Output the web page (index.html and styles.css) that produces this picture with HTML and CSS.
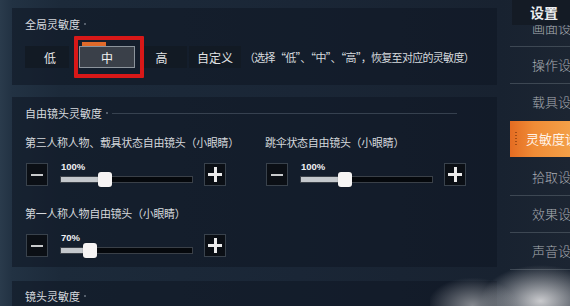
FILE: index.html
```html
<!DOCTYPE html>
<html lang="zh">
<head>
<meta charset="utf-8">
<link rel="stylesheet" href="styles.css">
</head>
<body>
<div class="screen">
  <main class="main">
    <section class="panel panel-global">
      <div class="title">全局灵敏度<span class="dot"></span></div>
      <div class="presets">
        <div class="preset p-low">低</div>
        <div class="preset p-mid selected">中<span class="tab"></span></div>
        <div class="preset p-high">高</div>
        <div class="preset p-custom">自定义</div>
        <div class="hint">（选择“低”、“中”、“高”，恢复至对应的灵敏度）</div>
        <div class="highlight"></div>
      </div>
    </section>

    <section class="panel panel-free">
      <div class="title with-line">自由镜头灵敏度<span class="dot"></span><span class="rule"></span></div>
      <div class="grid">
        <div class="cell">
          <div class="label">第三人称人物、载具状态自由镜头（小眼睛）</div>
          <div class="slider">
            <div class="step minus"><span class="bar-h"></span></div>
            <div class="track-wrap">
              <div class="value">100%</div>
              <div class="track"><div class="fill" style="width:33%"></div><div class="knob" style="left:28%"></div></div>
            </div>
            <div class="step plus"><span class="bar-h"></span><span class="bar-v"></span></div>
          </div>
        </div>
        <div class="cell">
          <div class="label">跳伞状态自由镜头（小眼睛）</div>
          <div class="slider">
            <div class="step minus"><span class="bar-h"></span></div>
            <div class="track-wrap">
              <div class="value">100%</div>
              <div class="track"><div class="fill" style="width:33%"></div><div class="knob" style="left:28%"></div></div>
            </div>
            <div class="step plus"><span class="bar-h"></span><span class="bar-v"></span></div>
          </div>
        </div>
        <div class="cell">
          <div class="label">第一人称人物自由镜头（小眼睛）</div>
          <div class="slider">
            <div class="step minus"><span class="bar-h"></span></div>
            <div class="track-wrap">
              <div class="value">70%</div>
              <div class="track"><div class="fill" style="width:22%"></div><div class="knob" style="left:17%"></div></div>
            </div>
            <div class="step plus"><span class="bar-h"></span><span class="bar-v"></span></div>
          </div>
        </div>
      </div>
    </section>

    <section class="panel panel-lens">
      <div class="title">镜头灵敏度<span class="dot"></span></div>
    </section>
  </main>

  <aside class="side">
    <div class="side-head">设置</div>
    <div class="side-item first">画面设</div>
    <div class="side-item">操作设</div>
    <div class="side-item">载具设</div>
    <div class="side-item active"><span class="grip"></span>灵敏度设</div>
    <div class="side-item">拾取设</div>
    <div class="side-item">效果设</div>
    <div class="side-item">声音设</div>
  </aside>
  <div class="smoke"></div>
</div>
</body>
</html>
```

FILE: styles.css
```css
* { box-sizing: border-box; margin: 0; padding: 0; }
html, body { width: 570px; height: 306px; overflow: hidden; background: #1b2735; }
body {
  font-family: "Noto Sans CJK SC", "Noto Sans", sans-serif;
  color: #d4d8dc;
}
.screen {
  position: relative;
  width: 570px;
  height: 306px;
  display: flex;
  background:
    linear-gradient(90deg, #2a3b4c 0px, #223243 12px, #1c2a3a 60px, #1a2636 300px, #182230 500px, #1c2532 570px);
  overflow: hidden;
}
.main {
  width: 507px;
  flex: none;
  padding: 8px 10px 0 12px;
  display: flex;
  flex-direction: column;
}
.panel {
  flex: none;
  background: rgba(14, 22, 34, 0.55);
  padding: 9px 0 0 13px;
}
.panel-global { height: 77px; }
.panel-free { height: 170px; margin-top: 12px; }
.panel-lens { margin-top: 14px; height: 40px; padding-top: 8px; }

.title {
  display: flex;
  align-items: center;
  font-size: 11px;
  line-height: 14px;
  height: 14px;
  color: #d6dade;
  white-space: nowrap;
}
.dot {
  width: 2px; height: 2px; border-radius: 50%;
  background: #6a7480; margin-left: 4px;
}
.rule {
  flex: none;
  width: 345px;
  height: 1px;
  background: rgba(120, 134, 150, 0.35);
  margin-left: 4px;
}

.presets {
  position: relative;
  display: flex;
  align-items: center;
  margin-top: 15px;
  height: 22px;
}
.preset {
  height: 22px;
  display: flex;
  align-items: center;
  justify-content: center;
  background: #121a24;
  font-size: 12px;
  color: #e2e4e6;
}
.p-low { width: 44px; margin-right: 10px; padding-left: 6px; }
.p-mid { width: 56px; margin-right: 9px; position: relative; }
.p-high { width: 43px; margin-right: 2px; padding-right: 8px; }
.p-custom { width: 52px; }
.selected {
  background: #3a4049;
  border: 1px solid #8c949c;
  color: #f2f2f2;
}
.tab {
  position: absolute;
  left: 2px; top: -5px;
  width: 24px; height: 4px;
  background: #e06a2a;
}
.hint {
  margin-left: 3px;
  font-size: 11px;
  color: #d6dade;
  white-space: nowrap;
  letter-spacing: -0.7px;
}
.highlight {
  position: absolute;
  left: 49px;
  top: -10px;
  width: 70px;
  height: 42px;
  border: 4px solid #d81818;
  border-radius: 1px;
}

.grid {
  display: grid;
  grid-template-columns: 240px 232px;
  margin-top: 15px;
  row-gap: 20px;
}
.label {
  font-size: 11px;
  line-height: 14px;
  color: #d4d8dc;
  white-space: nowrap;
  letter-spacing: -0.3px;
}
.slider {
  display: flex;
  align-items: flex-start;
  margin-top: 14px;
  margin-left: 1px;
}
.step {
  position: relative;
  width: 22px;
  height: 23px;
  background: #0b0f15;
  border: 1px solid #39424c;
  flex: none;
}
.bar-h {
  position: absolute;
  left: 4px; right: 4px; top: 10px;
  height: 2px;
  background: #c8cacc;
}
.plus .bar-h { left: 3px; right: 3px; height: 3px; top: 9px; background: #ececec; }
.bar-v {
  position: absolute;
  top: 3px; bottom: 3px; left: 9px;
  width: 3px;
  background: #ececec;
}
.track-wrap {
  width: 133px;
  margin: -1px 11px 0 12px;
}
.value {
  font-family: "Liberation Sans", Arial, sans-serif;
  font-weight: bold;
  font-size: 9.5px;
  line-height: 10px;
  color: #eef0f2;
  padding-left: 1px;
}
.track {
  position: relative;
  margin-top: 4px;
  height: 7px;
  background: #05080c;
  border: 1px solid #3a4048;
}
.fill {
  height: 100%;
  background: #c4c8cc;
}
.knob {
  position: absolute;
  top: -5px;
  width: 14px;
  height: 15px;
  background: #f6f4f4;
  border-radius: 3px;
  box-shadow: 0 0 1px rgba(0,0,0,0.6);
}

.side {
  width: 63px;
  flex: none;
  position: relative;
  padding-left: 3px;
  display: flex;
  flex-direction: column;
}
.side-head {
  position: relative;
  z-index: 2;
  flex: none;
  margin-left: 2px;
  height: 25px;
  background: #141b25;
  font-size: 14px;
  font-weight: bold;
  color: #eceef0;
  line-height: 25px;
  padding-left: 18px;
}
.side-item {
  flex: none;
  height: 37px;
  border-bottom: 1px solid rgba(130, 140, 150, 0.35);
  font-size: 13px;
  font-weight: 300;
  color: #a9adb2;
  line-height: 36px;
  padding-left: 22px;
  white-space: nowrap;
  overflow: hidden;
}
.side-item.first {
  line-height: 14px;
  margin-top: -4px;
  height: 26px;
}
.side-item:nth-child(4) { border-bottom: none; }
.side-item.active {
  position: relative;
  height: 36px;
  background: linear-gradient(90deg, #e46c22, #f08c36 40%, #f3a048);
  color: #fff3e8;
  font-weight: 400;
  border-bottom: none;
  padding-left: 16px;
  margin-bottom: 2px;
}
.grip {
  position: absolute;
  left: 5px; top: 11px;
  width: 2px; height: 14px;
  background: repeating-linear-gradient(180deg, rgba(120,50,10,0.6) 0 1px, transparent 1px 3px);
}
.smoke {
  position: absolute;
  right: -30px;
  bottom: -40px;
  width: 170px;
  height: 90px;
  background:
    radial-gradient(ellipse 45px 28px at 25% 55%, rgba(170,172,176,0.75), rgba(170,172,176,0) 100%),
    radial-gradient(ellipse 60px 36px at 65% 50%, rgba(220,220,222,0.9), rgba(220,220,222,0) 100%);
  pointer-events: none;
}
```
